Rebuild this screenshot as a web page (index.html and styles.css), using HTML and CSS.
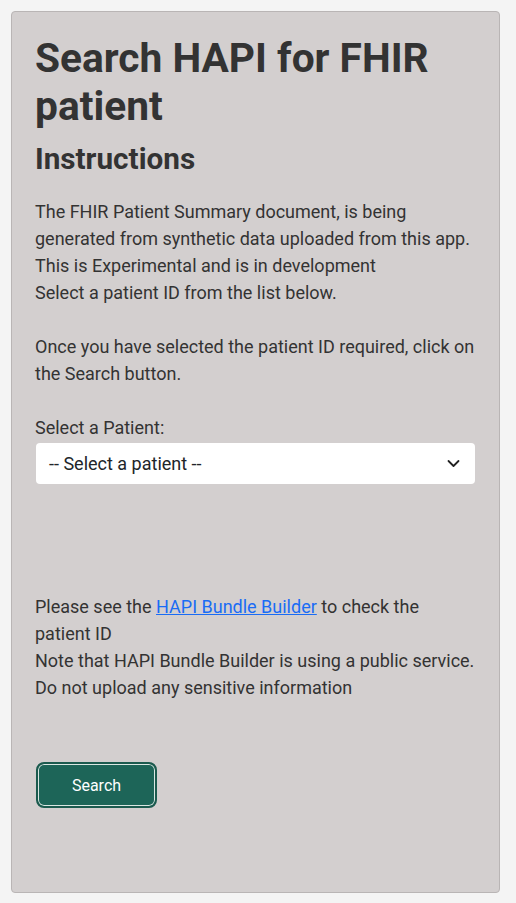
FILE: index.html
```html
<!DOCTYPE html>
<html lang="en">
<head>
<meta charset="utf-8">
<title>Search HAPI for FHIR patient</title>
<link rel="stylesheet" href="styles.css">
</head>
<body>
<main class="card">
  <h1 class="title">Search HAPI for FHIR patient</h1>
  <h2 class="subtitle">Instructions</h2>
  <p class="text">The FHIR Patient Summary document, is being generated from synthetic data uploaded from this app.<br>This is Experimental and is in development<br>Select a patient ID from the list below.<br><br>Once you have selected the patient ID required, click on the Search button.</p>
  <label class="label" for="patient">Select a Patient:</label>
  <div class="select">
    <span class="select-text">-- Select a patient --</span>
    <svg class="chevron" width="13" height="9" viewBox="0 0 13 9"><path d="M1.5 2 L6.5 7 L11.5 2" fill="none" stroke="#222" stroke-width="1.8" stroke-linecap="round" stroke-linejoin="round"/></svg>
  </div>
  <p class="text note">Please see the <a class="link" href="#">HAPI Bundle Builder</a> to check the patient ID<br>Note that HAPI Bundle Builder is using a public service.<br>Do not upload any sensitive information</p>
  <button class="btn" type="button">Search</button>
</main>
</body>
</html>
```
FILE: styles.css
```css
html, body {
  margin: 0;
  padding: 0;
  background: #f4f4f4;
}
body {
  padding: 11px;
  font-family: Roboto, "Liberation Sans", sans-serif;
  color: #333;
}
.card {
  box-sizing: border-box;
  width: 489px;
  height: 882px;
  background: #d3cfcf;
  border: 1px solid #b9b5b5;
  border-radius: 4px;
  padding: 22px 24px 0 23px;
  display: flex;
  flex-direction: column;
  align-items: flex-start;
}
.title {
  margin: 0;
  font-size: 40.7px;
  line-height: 48px;
  font-weight: 700;
  color: #333;
}
.subtitle {
  margin: 11px 0 0;
  font-size: 29.7px;
  line-height: 36px;
  font-weight: 700;
  color: #333;
}
.text {
  margin: 21px 0 0;
  font-size: 18px;
  line-height: 27px;
  color: #333;
}
.label {
  margin-top: 27px;
  font-size: 18px;
  line-height: 27px;
  color: #333;
}
.select {
  box-sizing: border-box;
  margin-top: 2px;
  margin-left: 1px;
  width: 439px;
  height: 41px;
  background: #fff;
  border-radius: 4px;
  display: flex;
  align-items: center;
  justify-content: space-between;
  padding: 0 15px 0 13px;
  color: #212529;
  font-size: 18px;
}
.chevron {
  display: block;
}
.note {
  margin-top: 109px;
}
.link {
  color: #1a6cf5;
  text-decoration: underline;
}
.btn {
  margin-top: 61px;
  margin-left: 1px;
  width: 121px;
  height: 46px;
  background: #1d6558;
  border: 2px solid #1b5a4e;
  border-radius: 8px;
  box-shadow: inset 0 0 0 1px #d9e6e2;
  color: #fff;
  font-family: Roboto, "Liberation Sans", sans-serif;
  font-size: 16px;
  cursor: pointer;
}
```
